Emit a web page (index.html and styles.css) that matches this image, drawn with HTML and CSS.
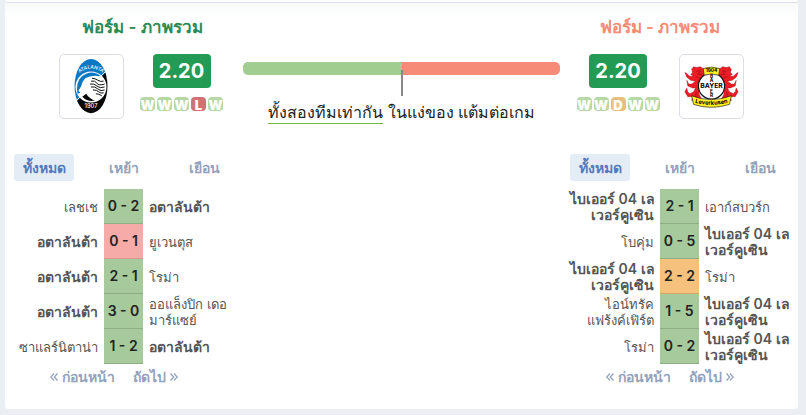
FILE: index.html
```html
<!DOCTYPE html>
<html lang="th">
<head>
<meta charset="utf-8">
<meta name="viewport" content="width=device-width, initial-scale=1">
<title>ฟอร์ม - ภาพรวม</title>
<link rel="stylesheet" href="styles.css">
</head>
<body>
<div class="previous-card"></div>
<main class="card">
  <section class="team home">
    <h2 class="title">ฟอร์ม - ภาพรวม</h2>
    <div class="summary">
      <div class="crest">
        <svg viewBox="0 0 65 65" aria-hidden="true">
          <defs>
            <clipPath id="oval"><ellipse cx="32" cy="32" rx="17" ry="28"/></clipPath>
            <path id="arc" d="M18 20Q32 8 46 20"/>
          </defs>
          <g clip-path="url(#oval)">
            <path fill="#0b78c4" d="M0 0H65V5L5 65H0Z"/>
            <path fill="#080808" d="M65 0V65H0Z"/>
            <path fill="none" stroke="#fff" stroke-width="1" d="M50 14L15 49"/>
            <circle cx="32" cy="33" r="16" fill="#fff"/>
            <path fill="#0b78c4" d="M18 30A14.500 14.500 0 0 1 42 22Q32 20 26 24Q23 27 22 32L19 37L21 39L18 40Q17 35 18 30Z"/>
            <path fill="#080808" d="M23 43L27 40Q30 45 36 47Q29 49 23 43Z"/>
          </g>
          <path fill="none" stroke="#080808" stroke-width="1" d="M33 24Q36 24 39 26T45 27M32 27Q36 26 38 29T46 30M31 30Q35 29 38 32T46 33M32 33Q36 32 39 35T46 36M34 36Q38 36 40 38T45 39M37 40Q40 40 43 42"/>
          <g class="crest-text light" text-anchor="middle">
            <text font-size="5"><textPath href="#arc" startOffset="50%">ATALANTA</textPath></text>
            <text font-size="6" x="32" y="55">1907</text>
          </g>
        </svg>
      </div>
      <div class="form">
        <strong class="points">2.20</strong>
        <div class="results"><span class="w">W</span><span class="w">W</span><span class="w">W</span><span class="l">L</span><span class="w">W</span></div>
      </div>
    </div>
    <div class="matches">
      <div class="tabs"><button class="active">ทั้งหมด</button><button>เหย้า</button><button>เยือน</button></div>
      <table>
        <tr><td>เลชเช</td><td class="score win">0 - 2</td><td class="own">อตาลันต้า</td></tr>
        <tr><td class="own">อตาลันต้า</td><td class="score loss">0 - 1</td><td>ยูเวนตุส</td></tr>
        <tr><td class="own">อตาลันต้า</td><td class="score win">2 - 1</td><td>โรม่า</td></tr>
        <tr><td class="own">อตาลันต้า</td><td class="score win">3 - 0</td><td>ออแล็งปิก เดอ<br>มาร์แซย์</td></tr>
        <tr><td>ซาแลร์นิตาน่า</td><td class="score win">1 - 2</td><td class="own">อตาลันต้า</td></tr>
      </table>
      <nav class="pager">
        <a href="#"><svg viewBox="0 0 8 8" aria-hidden="true"><path d="M4 .5L.8 4L4 7.500M7.500 .5L4.300 4L7.500 7.500"/></svg>ก่อนหน้า</a>
        <a href="#">ถัดไป<svg viewBox="0 0 8 8" aria-hidden="true"><path d="M.5 .5L3.700 4L.5 7.500M4 .5L7.200 4L4 7.500"/></svg></a>
      </nav>
    </div>
  </section>

  <section class="compare">
    <div class="bar"><span></span><span></span></div>
    <div class="tick"></div>
    <p><span class="verdict">ทั้งสองทีมเท่ากัน</span> ในแง่ของ แต้มต่อเกม</p>
  </section>

  <section class="team away">
    <h2 class="title">ฟอร์ม - ภาพรวม</h2>
    <div class="summary">
      <div class="form">
        <strong class="points">2.20</strong>
        <div class="results"><span class="w">W</span><span class="w">W</span><span class="d">D</span><span class="w">W</span><span class="w">W</span></div>
      </div>
      <div class="crest">
        <svg viewBox="0 0 65 65" aria-hidden="true">
          <defs>
            <path id="ribbon" d="M12 48Q32 55 53 48"/>
            <g id="lion">
              <path fill="#ee1c25" stroke="#8c1018" stroke-width=".4" d="M25 15L21 12L17 13L14 12L12 15L13 18L11 20L14 22L10 22L7 19L5 18L7 23L11 26L16 27L12 30L9 30L7 26L8 32L13 34L16 34L14 38L10 40L8 38L7 34L5 38L8 43L13 43L12 47L23 47L20 41L19 32L21 25L26 20Z"/>
              <path fill="none" stroke="#7a1218" stroke-width=".6" d="M17 17L21 16L19 20L23 20M16 22L20 24M17 38L16 44"/>
            </g>
          </defs>
          <use href="#lion"/>
          <use href="#lion" transform="translate(65 0) scale(-1 1)"/>
          <circle cx="32.500" cy="32" r="13.500" fill="#fff" stroke="#111" stroke-width="1.200"/>
          <path fill="#fff01f" stroke="#222" stroke-width=".7" d="M24 14Q32 11 41 14L40 21Q32 18 25 21Z"/>
          <path fill="#fff01f" stroke="#222" stroke-width=".7" d="M12 42Q32 50 53 42L51 51Q32 57 14 51Z"/>
          <g class="crest-text" text-anchor="middle">
            <text x="32.500" y="18" font-size="5">1904</text>
            <text x="32.500" y="34" font-size="7">BAYER</text>
            <text x="32.500" y="24" font-size="5">B</text>
            <text x="32.500" y="28" font-size="5">A</text>
            <text x="32.500" y="39" font-size="5">E</text>
            <text x="32.500" y="43" font-size="5">R</text>
            <text font-size="6"><textPath href="#ribbon" startOffset="50%">Leverkusen</textPath></text>
          </g>
        </svg>
      </div>
    </div>
    <div class="matches">
      <div class="tabs"><button class="active">ทั้งหมด</button><button>เหย้า</button><button>เยือน</button></div>
      <table>
        <tr><td class="own">ไบเออร์ 04 เล<br>เวอร์คูเซิน</td><td class="score win">2 - 1</td><td>เอาก์สบวร์ก</td></tr>
        <tr><td>โบคุ่ม</td><td class="score win">0 - 5</td><td class="own">ไบเออร์ 04 เล<br>เวอร์คูเซิน</td></tr>
        <tr><td class="own">ไบเออร์ 04 เล<br>เวอร์คูเซิน</td><td class="score draw">2 - 2</td><td>โรม่า</td></tr>
        <tr><td>ไอน์ทรัค<br>แฟร้งค์เฟิร์ต</td><td class="score win">1 - 5</td><td class="own">ไบเออร์ 04 เล<br>เวอร์คูเซิน</td></tr>
        <tr><td>โรม่า</td><td class="score win">0 - 2</td><td class="own">ไบเออร์ 04 เล<br>เวอร์คูเซิน</td></tr>
      </table>
      <nav class="pager">
        <a href="#"><svg viewBox="0 0 8 8" aria-hidden="true"><path d="M4 .5L.8 4L4 7.500M7.500 .5L4.300 4L7.500 7.500"/></svg>ก่อนหน้า</a>
        <a href="#">ถัดไป<svg viewBox="0 0 8 8" aria-hidden="true"><path d="M.5 .5L3.700 4L.5 7.500M4 .5L7.200 4L4 7.500"/></svg></a>
      </nav>
    </div>
  </section>
</main>
</body>
</html>
```
FILE: styles.css
```css
* { box-sizing: border-box; }
body {
  margin: 0;
  padding: 0 8px 6px 5px;
  background: #ebeff3;
  color: #222;
  font-family: Inter, "Noto Sans", sans-serif;
  font-size: 14px;
}
.previous-card {
  height: 3px;
  background: #fff;
  border-bottom: 1px solid #e0e1ec;
  border-radius: 0 0 5px 5px;
}
.card {
  display: grid;
  grid-template-columns: 229px 1fr 230px;
  padding: 12px 8px 22px 9px;
  background: #fff linear-gradient(#f7f9f9, #fff 14px);
  border-radius: 0 0 4px 4px;
}
.title {
  margin: 0;
  font-size: 17px;
  line-height: 24px;
  font-weight: 600;
  text-align: center;
}
.home .title { margin-left: 28px; color: #2b8a57; }
.away .title { margin-right: 30px; color: #f68c78; }
.summary {
  display: flex;
  justify-content: center;
  gap: 16px;
  margin-top: 15px;
}
.home .summary { margin-left: 25px; }
.away .summary { gap: 19px; margin-right: 30px; }
.crest {
  width: 65px;
  height: 65px;
  border: 1px solid #dcdde8;
  border-radius: 5px;
}
.crest svg { display: block; width: 100%; }
.crest-text { font-family: Inter, sans-serif; font-weight: 700; }
.light { fill: #fff; font-weight: 500; }
.form {
  display: flex;
  flex-direction: column;
  align-items: center;
  gap: 9px;
}
.points {
  width: 58px;
  border-radius: 4px;
  background: #249b54;
  color: #fff;
  font-size: 20px;
  line-height: 34px;
  font-weight: 700;
  text-align: center;
}
.results { display: flex; gap: 2px; }
.results span {
  display: flex;
  justify-content: center;
  width: 15px;
  height: 14px;
  border-radius: 4px;
  color: #fff;
  font-size: 13px;
  line-height: 17px;
  font-weight: 900;
}
.w { background: #b5d8a5; }
.l { background: #cb7474; }
.d { background: #e9bf80; }
.matches { width: 220px; margin-top: 35px; }
.away .matches { margin-left: auto; }
.tabs {
  display: grid;
  grid-template-columns: repeat(3, 1fr);
  gap: 20px;
}
.tabs button {
  height: 27px;
  padding: 0;
  border: 0;
  border-radius: 3px;
  background: none;
  color: #94a2bb;
  font: inherit;
  font-weight: 600;
  line-height: 27px;
}
.tabs .active { background: #e4ecf6; color: #527abd; }
table {
  width: 100%;
  margin-top: 8px;
  table-layout: fixed;
  border-collapse: separate;
  border-spacing: 0;
}
td {
  height: 35px;
  padding: 0 0 0 6px;
  color: #555;
  font-size: 13px;
  line-height: 16px;
  white-space: nowrap;
}
td:first-child { width: 90px; padding: 0 6px 0 0; text-align: right; }
.own { font-size: 14px; font-weight: 600; }
.score {
  width: 39px;
  padding: 0;
  border-bottom: 1px solid #8ead84;
  color: #222;
  font-size: 14px;
  font-weight: 600;
  text-align: center;
}
.win { background: #a7ca9d; }
.loss { background: #f6aba8; border-color: #d79691; }
.draw { background: #f6c07d; border-color: #d4a56a; }
.pager {
  display: flex;
  justify-content: center;
  gap: 18px;
  margin-right: 20px;
  padding-top: 3px;
}
.pager a {
  display: flex;
  align-items: center;
  gap: 4px;
  color: #94a2bb;
  font-weight: 600;
  line-height: 20px;
  text-decoration: none;
}
.pager svg { width: 8px; height: 8px; }
.pager path { fill: none; stroke: currentColor; stroke-width: 1.3; }
.compare {
  padding-top: 47px;
  font-size: 16px;
  text-align: center;
}
.bar {
  display: flex;
  height: 13px;
  overflow: hidden;
  border-radius: 5px;
}
.bar span { flex: 1; background: #a2cd91; }
.bar span + span { background: #f68c78; }
.tick {
  position: relative;
  width: 2px;
  height: 26px;
  margin: -5px auto 4px;
  background: #888;
}
.compare p { margin: 0; line-height: 24px; white-space: nowrap; }
.verdict { display: inline-block; border-bottom: 1px solid #74b843; line-height: 21px; }
```
